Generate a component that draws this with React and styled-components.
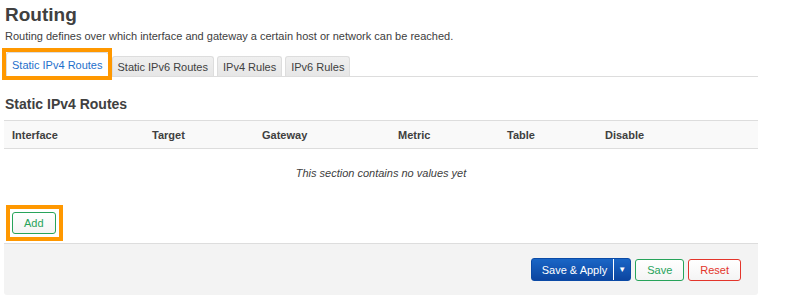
import React from "react";
import styled, { createGlobalStyle } from "styled-components";

const GlobalStyle = createGlobalStyle`
  body {
    margin: 0;
    background: #fff;
    font-family: "Liberation Sans", Arial, sans-serif;
    color: #404040;
  }
`;

const Page = styled.div`
  width: 754px;
  margin-left: 4px;
`;

const Title = styled.h2`
  margin: 0;
  padding: 3px 0 0 1px;
  font-size: 19px;
  line-height: 23px;
  font-weight: bold;
  color: #404040;
`;

const Description = styled.div`
  padding: 3px 0 0 1px;
  font-size: 11px;
  line-height: 14px;
`;

const Tabs = styled.ul`
  display: flex;
  align-items: flex-end;
  gap: 3px;
  list-style: none;
  margin: 4px 0 0;
  padding: 0 0 0 2px;
  height: 29px;
  border-bottom: 1px solid #ddd;
`;

const Tab = styled.li`
  position: relative;
  box-sizing: border-box;
  height: ${(p) => (p.$active ? "25px" : "20px")};
  padding: 0 5px;
  display: flex;
  align-items: center;
  font-size: 11px;
  color: ${(p) => (p.$active ? "#1e6fcb" : "#404040")};
  background: ${(p) =>
    p.$active ? "#fff" : "linear-gradient(#f0f0f0, #e6e6e6)"};
  border: 1px solid #ddd;
  border-bottom: none;
  border-radius: 3px 3px 0 0;
  margin-bottom: ${(p) => (p.$active ? "-1px" : "0")};
`;

const Highlight = styled.span`
  position: absolute;
  inset: ${(p) => p.$inset};
  border: 4px solid #ff9800;
  pointer-events: none;
`;

const SectionTitle = styled.h3`
  margin: 0;
  padding: 19px 0 0 1px;
  font-size: 14px;
  line-height: 16px;
  font-weight: bold;
`;

const Table = styled.div`
  margin-top: 8px;
`;

const HeadRow = styled.div`
  display: grid;
  grid-template-columns: 140px 110px 136px 109px 98px 1fr;
  height: 27px;
  align-items: center;
  padding-left: 8px;
  background: #f9f9f9;
  border-top: 1px solid #ddd;
  border-bottom: 1px solid #ddd;
  font-size: 11px;
  font-weight: bold;
`;

const EmptyRow = styled.div`
  height: 48px;
  display: flex;
  align-items: center;
  justify-content: center;
  font-size: 11px;
  font-style: italic;
  padding-bottom: 2px;
`;

const AddArea = styled.div`
  padding: 13px 0 9px 8px;
`;

const Button = styled.button`
  position: relative;
  box-sizing: border-box;
  height: 22px;
  padding: 0 ${(p) => p.$pad || "10px"};
  font-family: inherit;
  font-size: 11px;
  border-radius: 3px;
  border: 1px solid ${(p) => p.$color};
  color: ${(p) => p.$color};
  background: linear-gradient(#fff, #f4f4f4);
  cursor: pointer;
`;

const Footer = styled.div`
  display: flex;
  justify-content: flex-end;
  align-items: center;
  gap: 4px;
  height: 51px;
  padding: 0 17px 0 0;
  background: #f3f3f3;
  border-top: 1px solid #ddd;
  border-radius: 0 0 3px 3px;
`;

const Split = styled.div`
  display: flex;
  height: 23px;
  border-radius: 3px;
  overflow: hidden;
  background: linear-gradient(#1a66c6, #0c45a0);
  border: 1px solid #0b4aa6;
  box-sizing: border-box;
`;

const SplitMain = styled.span`
  display: flex;
  align-items: center;
  padding: 0 6px 0 10px;
  color: #fff;
  font-size: 11px;
  border-right: 1px solid #fff;
`;

const SplitArrow = styled.span`
  display: flex;
  align-items: center;
  justify-content: center;
  width: 16px;
  color: #fff;
  font-size: 8px;
`;

export default function App() {
  return (
    <Page>
      <GlobalStyle />
      <Title>Routing</Title>
      <Description>
        Routing defines over which interface and gateway a certain host or
        network can be reached.
      </Description>
      <Tabs>
        <Tab $active>
          Static IPv4 Routes
          <Highlight $inset="-5px -4px -3px -5px" />
        </Tab>
        <Tab>Static IPv6 Routes</Tab>
        <Tab>IPv4 Rules</Tab>
        <Tab>IPv6 Rules</Tab>
      </Tabs>
      <SectionTitle>Static IPv4 Routes</SectionTitle>
      <Table>
        <HeadRow>
          <span>Interface</span>
          <span>Target</span>
          <span>Gateway</span>
          <span>Metric</span>
          <span>Table</span>
          <span>Disable</span>
        </HeadRow>
        <EmptyRow>This section contains no values yet</EmptyRow>
      </Table>
      <AddArea>
        <Button $color="#27a35a" $pad="11px">
          Add
          <Highlight $inset="-8px -8px -8px -7px" />
        </Button>
      </AddArea>
      <Footer>
        <Split>
          <SplitMain>Save &amp; Apply</SplitMain>
          <SplitArrow>▼</SplitArrow>
        </Split>
        <Button $color="#27a35a" $pad="11px">Save</Button>
        <Button $color="#e3352b" $pad="11px">Reset</Button>
      </Footer>
    </Page>
  );
}
